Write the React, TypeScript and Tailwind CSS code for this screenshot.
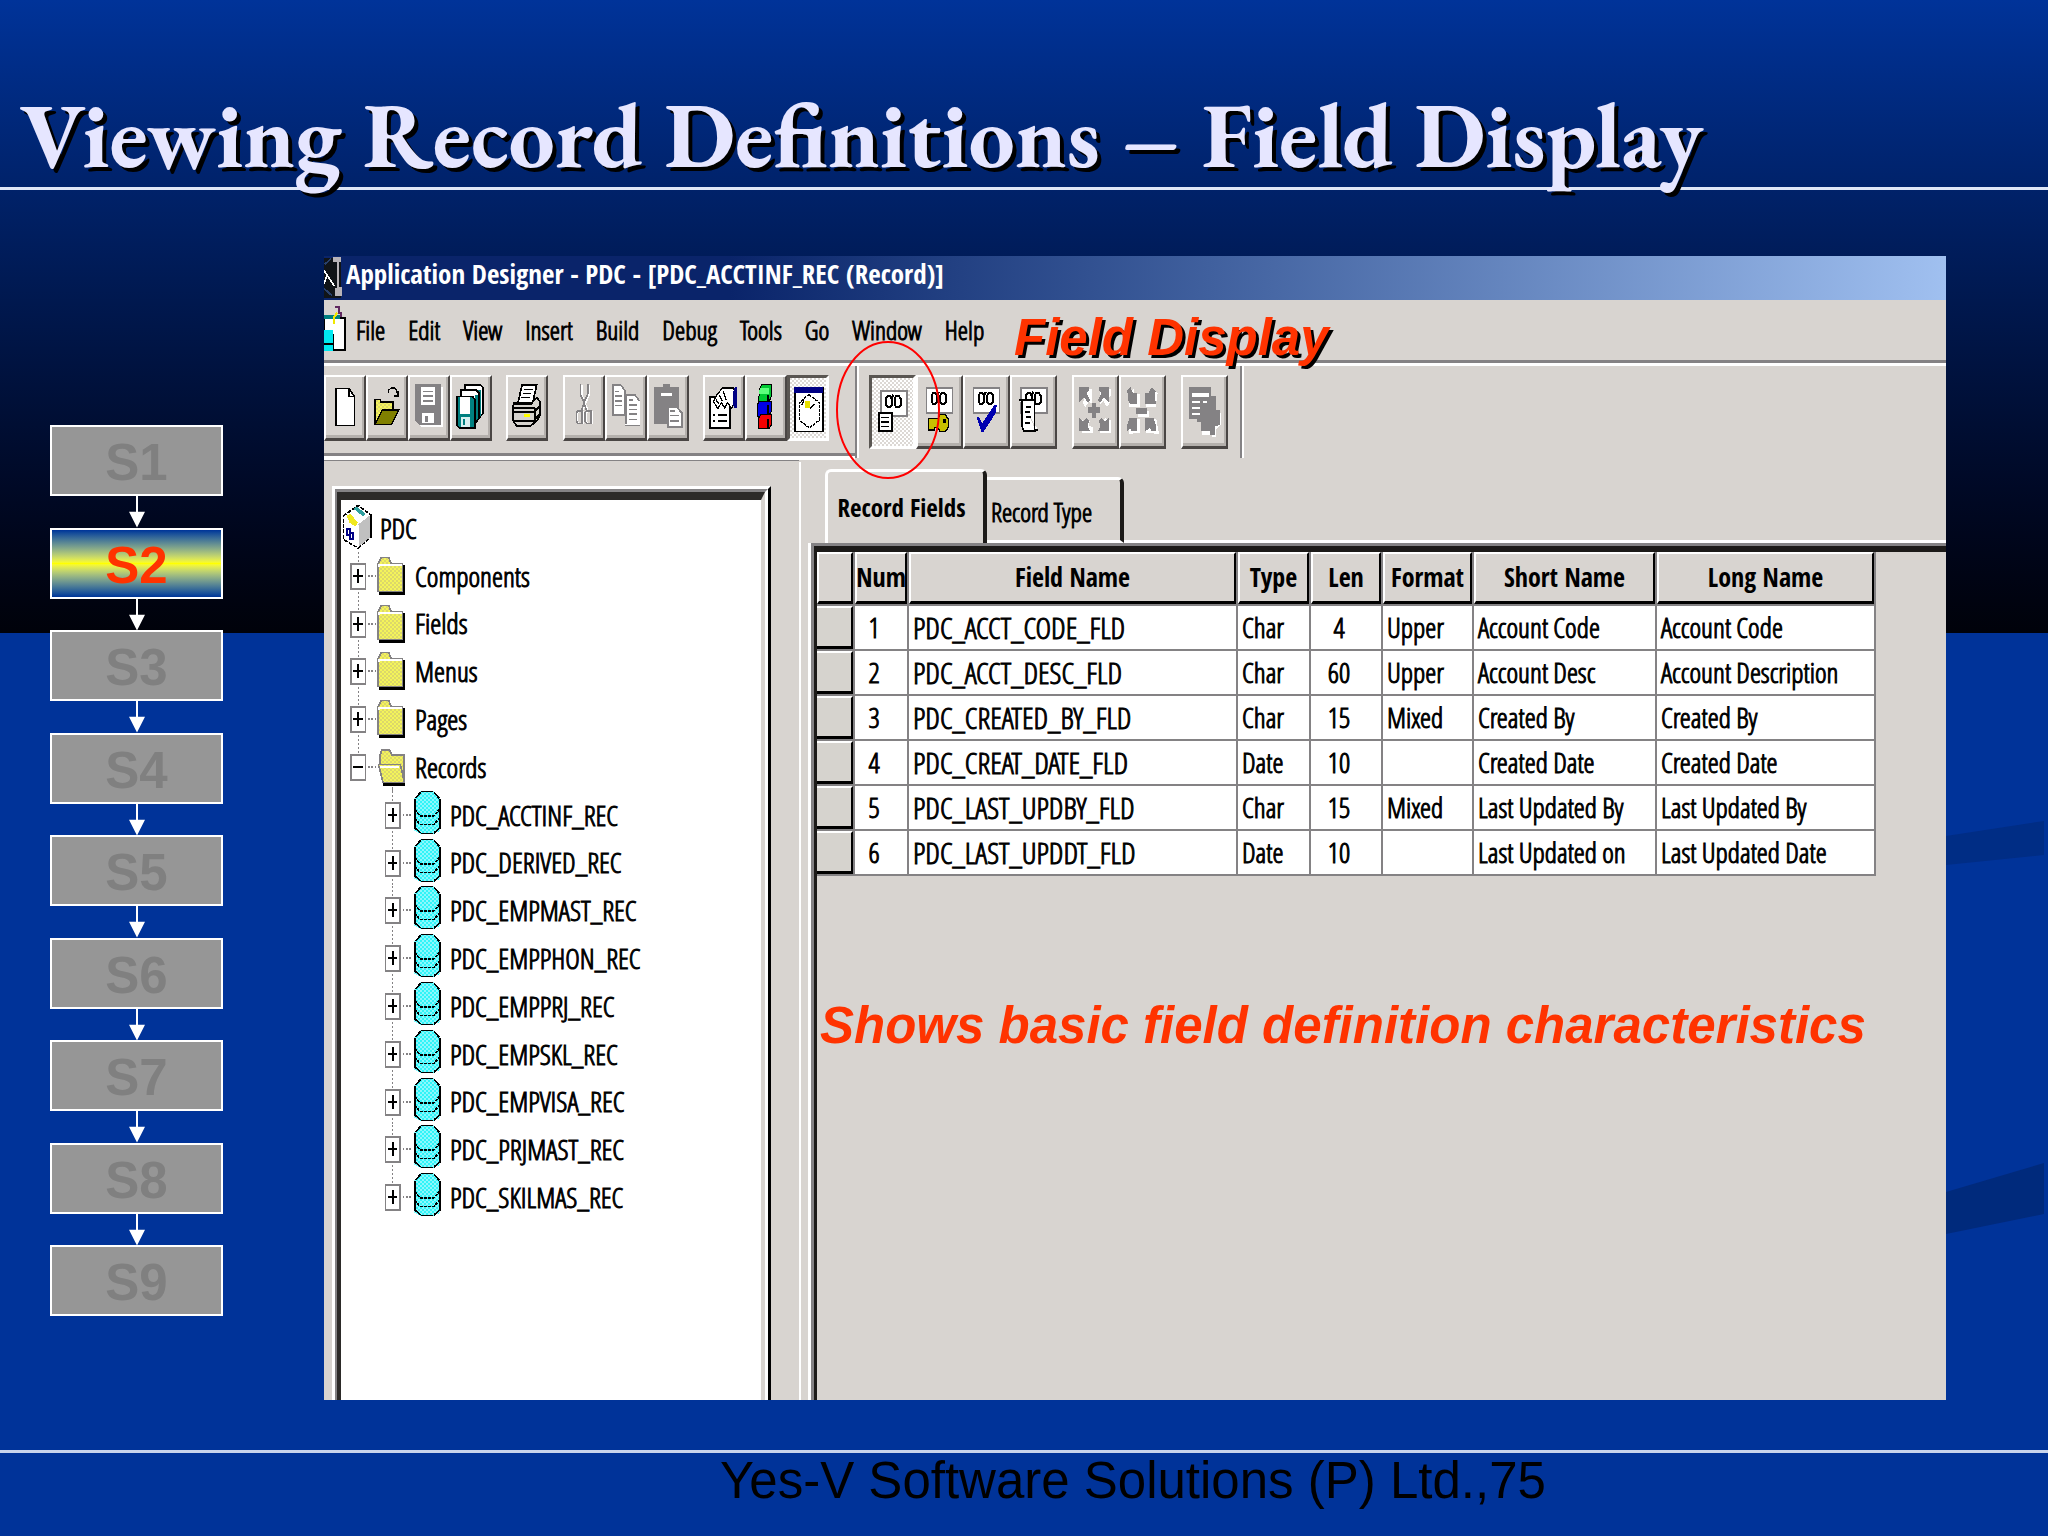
import type { ReactNode } from "react";
import clsx from "clsx";

const STEPS = ["S1", "S2", "S3", "S4", "S5", "S6", "S7", "S8", "S9"];
const CURRENT = "S2";

const MENUS = ["File", "Edit", "View", "Insert", "Build", "Debug", "Tools", "Go", "Window", "Help"];

const FOLDERS = ["Components", "Fields", "Menus", "Pages"];

const RECORDS = [
  "PDC_ACCTINF_REC",
  "PDC_DERIVED_REC",
  "PDC_EMPMAST_REC",
  "PDC_EMPPHON_REC",
  "PDC_EMPPRJ_REC",
  "PDC_EMPSKL_REC",
  "PDC_EMPVISA_REC",
  "PDC_PRJMAST_REC",
  "PDC_SKILMAS_REC",
];

const COLUMNS = [
  { label: "Num", width: "w-[54px]" },
  { label: "Field Name", width: "w-[329px]" },
  { label: "Type", width: "w-[73px]" },
  { label: "Len", width: "w-[72px]" },
  { label: "Format", width: "w-[91px]" },
  { label: "Short Name", width: "w-[183px]" },
  { label: "Long Name", width: "w-[219px]" },
];

const FIELDS = [
  ["1", "PDC_ACCT_CODE_FLD", "Char", "4", "Upper", "Account Code", "Account Code"],
  ["2", "PDC_ACCT_DESC_FLD", "Char", "60", "Upper", "Account Desc", "Account Description"],
  ["3", "PDC_CREATED_BY_FLD", "Char", "15", "Mixed", "Created By", "Created By"],
  ["4", "PDC_CREAT_DATE_FLD", "Date", "10", "", "Created Date", "Created Date"],
  ["5", "PDC_LAST_UPDBY_FLD", "Char", "15", "Mixed", "Last Updated By", "Last Updated By"],
  ["6", "PDC_LAST_UPDDT_FLD", "Date", "10", "", "Last Updated on", "Last Updated Date"],
];

const uiFont = "font-['Open_Sans_Condensed_Light','Roboto_Condensed',sans-serif]";
const uiBold = "font-['Open_Sans_Condensed','Roboto_Condensed',sans-serif] font-bold";
// the light condensed face is too thin for bitmap-style labels
const inked = "[-webkit-text-stroke:1px_#000]";

// shared fills: two-tone dithers, as 16-colour bitmaps have
function Patterns() {
  return (
    <svg className="absolute h-0 w-0" aria-hidden="true">
      <defs>
        <pattern id="yellow" width="12" height="12" patternUnits="userSpaceOnUse">
          <rect width="12" height="12" fill="#f4f45a" />
          <path d="M0 0h6v6H0zM6 6h6v6H6z" fill="#dcd86a" />
        </pattern>
        <pattern id="cyan" width="12" height="12" patternUnits="userSpaceOnUse">
          <rect width="12" height="12" fill="#30f4f8" />
          <path d="M0 0h6v6H0zM6 6h6v6H6z" fill="#8cf8fc" />
        </pattern>
        <pattern id="pressed" width="12" height="12" patternUnits="userSpaceOnUse">
          <rect width="12" height="12" fill="#ffffff" />
          <path d="M0 0h6v6H0zM6 6h6v6H6z" fill="#dcd8d4" />
        </pattern>
      </defs>
    </svg>
  );
}

function Backdrop() {
  return (
    <div className="absolute inset-0 bg-[#003399]">
      <div className="h-[633px] bg-linear-to-b from-[#003399] to-[#00020a]" />
      <svg className="absolute right-0 bottom-0 h-[776px] w-[108px]" viewBox="0 0 108 776" aria-hidden="true">
        <path d="M6 76L104 61V95L6 105Z" fill="#002d85" />
        <path d="M6 432L104 403V454L6 474Z" fill="#002a7c" />
      </svg>
    </div>
  );
}

function Steps() {
  return (
    <ol className="mt-[235px] ml-[50px] flex h-[891px] w-[173px] shrink-0 flex-col items-center font-['Liberation_Sans',sans-serif] text-[51px] font-bold">
      {STEPS.map((step, i) => (
        <li key={step} className={clsx("flex w-full flex-col items-center", i > 0 && "min-h-0 flex-1")}>
          {i > 0 && (
            <svg className="h-0 w-4 flex-1" viewBox="0 0 16 32" preserveAspectRatio="none" aria-hidden="true">
              <path d="M7 0h2v16h7L8 32 0 16h7z" fill="#ffffff" />
            </svg>
          )}
          <button
            className={clsx(
              "h-[71px] w-full shrink-0 border-2 border-white leading-[71px]",
              step === CURRENT
                ? "bg-linear-to-b from-[#003399] via-[#ffff00] to-[#003399] text-[#ff3300]"
                : "bg-[#969696] text-[#808080]"
            )}
          >
            {step}
          </button>
        </li>
      ))}
    </ol>
  );
}

function ToolButton({ label, view, pressed, tall, children }: {
  label: string;
  view: string;
  pressed?: boolean;
  tall?: boolean;
  children: ReactNode;
}) {
  return (
    <button
      aria-label={label}
      className={clsx(
        "shrink-0 overflow-hidden",
        tall ? "h-[74px] w-[47px]" : "h-[66px] w-[42px]",
        pressed
          ? "border-t-3 border-r-3 border-b-3 border-l-3 border-t-[#5a5652] border-r-white border-b-white border-l-[#5a5652]"
          : "border-t-2 border-r-2 border-b-3 border-l-2 border-t-white border-r-[#4a4644] border-b-[#4a4644] border-l-white shadow-[inset_-2px_-3px_0_#b4b0ac]"
      )}
    >
      <svg
        className={clsx(
          pressed ? "-mt-[3px] -ml-[3px]" : "-mt-[2px] -ml-[2px]",
          tall ? "h-[74px] w-[47px]" : "h-[66px] w-[42px]"
        )}
        viewBox={view}
        shapeRendering="crispEdges"
        aria-hidden="true"
      >
        {children}
      </svg>
    </button>
  );
}

function MainTools() {
  return (
    <div className="flex">
      <ToolButton label="New" view="12 45 126 198">
        <path d="M48 85h38l17 24v87H48z" fill="#fff" stroke="#000" strokeWidth="5" />
        <path d="M86 85v24h17" fill="none" stroke="#000" strokeWidth="5" />
      </ToolButton>
      <ToolButton label="Open" view="138 45 126 198">
        <path d="M165 190v-72h16v8h38v24h-30l-18 40z" fill="url(#yellow)" stroke="#000" strokeWidth="4" />
        <path d="M187 150h49l-21 43h-49z" fill="#808000" stroke="#000" strokeWidth="4" />
        <path d="M206 98v-8l8-6h10l6 8 4 16M222 108h14V92" fill="none" stroke="#000" strokeWidth="4" />
      </ToolButton>
      <ToolButton label="Save" view="264 45 126 198">
        <path d="M292 80h76v122h-62l-8-8z" fill="#fff" />
        <path d="M286 72h76v122h-66l-10-10z" fill="#848284" />
        <path d="M304 82h42v52h-42z" fill="#fff" />
        <path d="M310 92h30v5h-30zM310 106h30v5h-30zM310 120h30v5h-30z" fill="#848284" />
        <path d="M306 160h36v30h-36z" fill="#fff" />
        <path d="M314 168h10v18h-10z" fill="#848284" />
      </ToolButton>
      <ToolButton label="Save all" view="390 45 126 198">
        <path d="M434 92V75h48l6 8v78l-10 12h-44z" fill="#fff" stroke="#000" strokeWidth="5" />
        <path d="M474 90h10v76l-12 10z" fill="#008080" />
        <path d="M422 104V90h46l8 8v78l-8 12h-46z" fill="#fff" stroke="#000" strokeWidth="5" />
        <path d="M464 104h10v72l-10 12z" fill="#008080" />
        <path d="M411 109h46l7 8v87h-46l-7-9z" fill="#008080" stroke="#000" strokeWidth="5" />
        <path d="M419 111h32v50h-32z" fill="#fff" />
        <path d="M423 172h26v30h-26z" fill="#d8f0f0" />
        <path d="M428 178h8v18h-8z" fill="#008080" />
      </ToolButton>
      <div className="w-[14px]" />
      <ToolButton label="Print" view="558 45 126 198">
        <path d="M606 75h44l-12 54h-44z" fill="#fff" stroke="#000" strokeWidth="5" />
        <path d="M612 89h26M608 101h26M604 113h26" stroke="#000" strokeWidth="4" />
        <path d="M592 128h-10l-4 14v38l12 18h42l20-18 8-14v-40l-8-12-8 4-10 14H582" fill="#d6d3ce" stroke="#000" strokeWidth="5" />
        <path d="M578 144h66M578 156h66l18-22M580 182h62l20-24M644 144v44" fill="none" stroke="#000" strokeWidth="5" />
        <path d="M611 161h20v9h-20z" fill="#ffff00" />
      </ToolButton>
      <div className="w-[15px]" />
      <ToolButton label="Cut" view="729 45 126 198">
        <path d="M785 75v30l10 24 8 20M807 75v30l-10 24-8 20" fill="none" stroke="#fff" strokeWidth="5" />
        <path d="M776 154h14v36h-14l-4-6v-24zM804 154h12v36h-12l-6-6v-24z" fill="none" stroke="#fff" strokeWidth="5" />
        <path d="M781 72v30l10 24 8 24M803 72v30l-10 24-8 24" fill="none" stroke="#848284" strokeWidth="5" />
        <path d="M774 152h12v38h-12l-5-6v-26zM800 152h12v38h-12l-5-6v-26z" fill="none" stroke="#848284" strokeWidth="5" />
      </ToolButton>
      <ToolButton label="Copy" view="855 45 126 198">
        <path d="M878 75h24l12 16v74h-36z" fill="#fff" stroke="#848284" strokeWidth="5" />
        <path d="M884 94h14M884 108h22M884 122h22M884 136h22" stroke="#848284" strokeWidth="5" />
        <path d="M918 104h26l14 18v72h-40z" fill="#fff" stroke="#848284" strokeWidth="5" />
        <path d="M926 120h14M926 134h24M926 148h24M926 162h24M926 178h24" stroke="#848284" strokeWidth="5" />
        <path d="M958 122v72h-44" fill="none" stroke="#fff" strokeWidth="4" />
      </ToolButton>
      <ToolButton label="Paste" view="981 45 126 198">
        <path d="M1002 80h26v-9h22v9h26v112h-74z" fill="#848284" />
        <path d="M1024 98h32v9h-32z" fill="#fff" />
        <path d="M1043 140h26l16 18v42h-42z" fill="#fff" stroke="#848284" strokeWidth="5" />
        <path d="M1050 152h14M1050 166h26M1050 182h26" stroke="#848284" strokeWidth="5" />
      </ToolButton>
      <div className="w-[14px]" />
      <ToolButton label="Properties" view="1149 45 126 198">
        <path d="M1170 111h60v93h-60z" fill="#fff" stroke="#000" strokeWidth="5" />
        <path d="M1178 165h8M1194 165h26M1178 184h8M1194 184h26" stroke="#000" strokeWidth="6" />
        <path d="M1180 124l12-22 16-18h32l8 14v28l-14 18-12-16-8 16-10-16-10 18z" fill="#fff" stroke="#000" strokeWidth="4" />
        <path d="M1188 118l8 14M1198 104l10 20M1210 94l8 26" stroke="#000" strokeWidth="4" />
        <path d="M1244 82h8v62h-8l-4-8V94z" fill="#000084" />
      </ToolButton>
      <ToolButton label="Build" view="1275 45 126 198">
        <path d="M1320 84l6-12h29v34l-8 20h-32z" fill="#00c832" stroke="#000" strokeWidth="3" />
        <path d="M1320 84h26v18h-30z" fill="#5cff7c" />
        <path d="M1312 134l6-10h36v30l-8 14h-34z" fill="#0000e8" stroke="#000" strokeWidth="3" />
        <path d="M1316 174l6-10h33v30l-8 12h-31z" fill="#f40000" stroke="#000" strokeWidth="3" />
        <path d="M1344 104v20M1344 136v30M1344 176v28" stroke="#000" strokeWidth="4" />
      </ToolButton>
      <ToolButton label="Project workspace" view="1401 45 126 198" pressed>
        <path d="M1401 45h126v198h-126z" fill="url(#pressed)" />
        <path d="M1425 84h83v130h-83z" fill="#fff" stroke="#000" strokeWidth="5" />
        <path d="M1422 82h88v18h-88z" fill="#000084" />
        <path d="M1466 104l32 24v52l-30 24-30-24v-52z" fill="#fff" stroke="#000" strokeWidth="4" strokeDasharray="9 3" />
        <path d="M1454 124h16v20h-16z" fill="#e8e000" />
        <path d="M1470 146l14-14M1452 122l-8 14" stroke="#000" strokeWidth="4" />
      </ToolButton>
    </div>
  );
}

// small card with two loops, drawn at the top of each record view icon
function Card({ x, y }: { x: number; y: number }) {
  return (
    <g transform={`translate(${x} ${y})`}>
      <path d="M2 2h78v74H2z" fill="#fff" stroke="#848284" strokeWidth="5" />
      <path d="M18 24l4-6h8l5 6v20l-5 5h-8l-4-5zM44 24l4-6h9l5 6v20l-5 5h-9l-4-5zM35 22l5-8" fill="none" stroke="#000" strokeWidth="6" />
    </g>
  );
}

function RecordTools() {
  return (
    <div className="flex">
      <ToolButton label="Field display" view="147 135 141 222" pressed tall>
        <path d="M147 135h141v222H147z" fill="url(#pressed)" />
        <Card x={180} y={181} />
        <path d="M177 248h38v56h-38z" fill="#fff" stroke="#000" strokeWidth="6" />
        <path d="M184 262h24M184 275h24M184 289h24" stroke="#000" strokeWidth="5" />
      </ToolButton>
      <ToolButton label="Use display" view="288 135 141 222" tall>
        <Card x={317} y={172} />
        <path d="M326 266h28l6-12h16l9 14v24l-9 12h-16l-8-12h-8v8h-18z" fill="#c8c000" stroke="#000" strokeWidth="4" />
        <path d="M370 268h7v12h-7z" fill="#000" />
      </ToolButton>
      <ToolButton label="Edits display" view="429 135 141 222" tall>
        <Card x={458} y={172} />
        <path d="M470 262h8l8 18 36-54h8l-2 22-38 58h-6z" fill="#0000b0" />
      </ToolButton>
      <ToolButton label="PeopleCode display" view="570 135 141 222" tall>
        <Card x={600} y={172} />
        <path d="M597 210h46v90h12M606 212v76l6 15h36" fill="#fff" stroke="#000" strokeWidth="5" />
        <path d="M618 230h16M614 246h16M618 262h16M614 278h16" stroke="#000" strokeWidth="6" />
      </ToolButton>
      <div className="w-[15px]" />
      <ToolButton label="Expand all" view="759 135 141 222" tall>
        <path d="M788 178h32v44l-10-8-12 18-6-14 4-12-8-8zM876 178h-32v44l10-8 10 18 8-14-4-12 8-8zM788 308v-40l8 6 8-10 8 10-4 12 14 6v18zM876 308v-40l-8 6-8-10-8 10 4 12-14 6v18z" fill="#fff" />
        <path d="M781 172h30v10l-8 8 10 20-6 8-12-16-14 14zM869 172h-30v10l8 8-10 20 6 8 12-16 14 14zM781 304v-40l12 10 10-10 8 10-6 14 8 16zM869 304v-40l-12 10-10-10-8 10 6 14-8 16zM818 218h14v14h10v18h-10v14h-14v-14h-10v-18h10z" fill="#848284" />
      </ToolButton>
      <ToolButton label="Collapse all" view="900 135 141 222" tall>
        <path d="M930 188l16-12v16h16v40h-32zM982 232v-40h16v-16l18 14-6 42zM930 312v-22l10-22h22v40zM982 308v-40h30l8 44zM956 242h34v18h-34z" fill="#fff" />
        <path d="M925 182l10-10 6 16h14v34h-22l-6-14zM978 222v-34h12l6-16 14 10-2 24 4 16zM925 304v-20l6-20h22v40h-14l-6-10zM978 304v-40h26l8 24v16h-14l-6-10zM952 234h32v18h-32z" fill="#848284" />
      </ToolButton>
      <div className="w-[15px]" />
      <ToolButton label="Insert field" view="1086 135 141 222" tall>
        <path d="M1128 270h20v44h30v8h14v-24l14-16V250h-14z" fill="#fff" />
        <path d="M1110 172h66v26h16v42h10v44l-14 6v26h-16v-14h-26v-26h-12v-10h-24z" fill="#848284" />
        <path d="M1118 188h52v14h-52zM1118 212h26v8h-26zM1118 230h26v8h-26zM1118 248h26v8h-26zM1152 212h12v8h-12z" fill="#fff" />
      </ToolButton>
    </div>
  );
}

function Folder() {
  return (
    <>
      <path d="M178 268h76v88h-76z" fill="#000" />
      <path d="M174 346v-82l10-20h22l8 20h33v82z" fill="url(#yellow)" stroke="#848284" strokeWidth="5" />
      <path d="M178 272v-4h68" fill="none" stroke="#fff" strokeWidth="6" />
    </>
  );
}

function OpenFolder() {
  return (
    <>
      <path d="M190 268h66v90h-66z" fill="#000" />
      <path d="M180 300v-34l6-18h22l8 16h36v76h-6z" fill="url(#yellow)" stroke="#848284" strokeWidth="5" />
      <path d="M175 292h66l12 54h-64z" fill="url(#yellow)" stroke="#848284" strokeWidth="5" />
      <path d="M179 300h58" stroke="#fff" strokeWidth="8" />
    </>
  );
}

function Expander({ x, open, last }: { x: number; open?: boolean; last?: boolean }) {
  return (
    <>
      <path d={last ? `M${x} 228v36` : `M${x} 228v144`} stroke="#848284" strokeWidth="3" strokeDasharray="6 6" />
      <path d={`M${x + 30} 300h28`} stroke="#848284" strokeWidth="4" strokeDasharray="5 5" />
      <path d={`M${x - 22} 264h44v74h-44z`} fill="#fff" stroke="#848284" strokeWidth="5" />
      <path d={open ? `M${x - 14} 300h28` : `M${x - 14} 300h28M${x} 280v40`} stroke="#000" strokeWidth="5" />
    </>
  );
}

function TreeRow({ label, children, view, width }: { label: string; children: ReactNode; view: string; width: string }) {
  return (
    <li className="flex min-h-0 items-center">
      <svg className={clsx("h-12 shrink-0", width)} viewBox={view} shapeRendering="crispEdges" aria-hidden="true">
        {children}
      </svg>
      <button className={clsx("leading-8 whitespace-nowrap", inked)}>{label}</button>
    </li>
  );
}

function ProjectTree() {
  return (
    <ul className="mt-1 ml-px grid h-[717px] auto-rows-fr text-[28px]">
      <TreeRow label="PDC" view="66 80 114 144" width="w-[38px]">
        <path d="M70 116l44-32 38 28v68l-38 32-44-26z" fill="#fff" stroke="#000" strokeWidth="5" strokeDasharray="12 4" />
        <path d="M114 142l36-28v66l-36 30z" fill="#c0c0c0" />
        <path d="M72 118l42 26M114 144v66" stroke="#fff" strokeWidth="4" />
        <path d="M152 112v68" stroke="#000" strokeWidth="5" />
        <path d="M80 114l12-4 22 26-8 12-18-12z" fill="#f0e820" />
        <path d="M100 94l10-6 28 22-8 8z" fill="#30a0a0" />
        <path d="M80 154h10v12h8v18h-8v-12h-10z" fill="none" stroke="#000084" strokeWidth="5" />
      </TreeRow>
      {FOLDERS.map((name) => (
        <TreeRow key={name} label={name} view="66 228 219 144" width="w-[73px]">
          <Expander x={114} />
          <Folder />
        </TreeRow>
      ))}
      <TreeRow label="Records" view="66 228 219 144" width="w-[73px]">
        <Expander x={114} open last />
        <path d="M218 360v12" stroke="#848284" strokeWidth="3" />
        <OpenFolder />
      </TreeRow>
      {RECORDS.map((name, i) => (
        <TreeRow key={name} label={name} view="66 228 324 144" width="w-[108px]">
          <Expander x={218} last={i === RECORDS.length - 1} />
          <path d="M302 228h38l20 22v98l-20 8h-38l-19-8v-98z" fill="url(#cyan)" />
          <path d="M302 229h38M302 355h38M284 252v90M359 252v90M286 250l16-18M358 250l-16-18M286 340l16 14M358 340l-16 14" stroke="#000" strokeWidth="5" />
          <path d="M284 284l16 18h42l16-18M284 310l16 18h42l16-18" fill="none" stroke="#000" strokeWidth="5" strokeDasharray="9 3" />
        </TreeRow>
      ))}
    </ul>
  );
}

function FieldTable() {
  return (
    <table className="w-[1059px] table-fixed border-separate border-spacing-0 text-[28px]">
      <thead>
        <tr className={clsx("h-[54px] text-[26px]", uiBold)}>
          <th className="w-[38px] border-r-2 border-b-2 border-[#848284] p-0" aria-label="Row">
            <div className="h-[52px] border-t-2 border-r-2 border-b-3 border-l-2 border-t-white border-r-black border-b-black border-l-white" />
          </th>
          {COLUMNS.map((column) => (
            <th key={column.label} scope="col" className={clsx("border-r-2 border-b-2 border-[#848284] p-0", column.width)}>
              <div className="flex h-[52px] items-center justify-center border-t-2 border-r-2 border-b-3 border-l-2 border-t-white border-r-black border-b-black border-l-white">
                {column.label}
              </div>
            </th>
          ))}
        </tr>
      </thead>
      <tbody className={inked}>
        {FIELDS.map((row) => (
          <tr key={row[0]} className="h-[45px]">
            <td className="border-r-2 border-b-2 border-[#848284] bg-[#d6d3ce] p-0">
              <div className="h-[43px] border-t-2 border-r-2 border-b-3 border-t-white border-r-black border-b-black" />
            </td>
            {row.map((cell, i) => (
              <td
                key={i}
                className={clsx(
                  "border-r-2 border-b-2 border-[#848284] bg-white p-0 leading-[43px] whitespace-nowrap",
                  i === 0 || i === 3 ? "pr-[14px] text-center" : "pl-1",
                  i === 1 && "text-[30px]"
                )}
              >
                {cell}
              </td>
            ))}
          </tr>
        ))}
      </tbody>
    </table>
  );
}

function DesignerWindow() {
  return (
    <section className={clsx("mt-[66px] mr-[102px] mb-[50px] ml-[101px] flex min-w-0 flex-1 flex-col bg-[#d8d4d0] text-black", uiFont)}>
      <div className={clsx("flex h-11 items-center bg-linear-to-r from-[#0a246a] from-25% to-[#a0c0f0] text-[27px] text-white", uiBold)}>
        <svg className="h-11 w-[22px]" viewBox="12 15 66 132" shapeRendering="crispEdges" aria-hidden="true">
          <path d="M12 20h50v122H12z" fill="#101418" />
          <path d="M40 18h24v14h-6v76h8v28H46v-24h4V32H40z" fill="#b8b4b8" />
          <path d="M12 58l32 48M12 100l8-24" stroke="#fff" strokeWidth="5" />
          <path d="M12 112l24 22M14 40l20-18" stroke="#28406c" strokeWidth="5" />
        </svg>
        <h2 className="pb-2">Application Designer - PDC - [PDC_ACCTINF_REC (Record)]</h2>
      </div>

      <nav className="relative flex h-[60px] items-center gap-[23px] text-[26px]">
        <svg className="-mr-[13px] h-[60px] w-[22px]" viewBox="12 150 66 180" shapeRendering="crispEdges" aria-hidden="true">
          <path d="M12 204h64v96H12z" fill="#fff" stroke="#000" strokeWidth="6" />
          <path d="M12 196h48v10H12z" fill="#008080" />
          <path d="M12 240h28v64H12z" fill="#00e8f0" />
          <path d="M12 282h26M40 252v52" stroke="#000" strokeWidth="5" />
          <path d="M42 222v-20l10-14" fill="none" stroke="#f0e800" strokeWidth="6" />
          <path d="M46 172h10v16h8v14" fill="none" stroke="#602860" strokeWidth="6" />
        </svg>
        {MENUS.map((menu) => (
          <button key={menu} className={inked}>
            {menu}
          </button>
        ))}
        <p className="absolute top-2 left-[690px] font-['Liberation_Sans',sans-serif] text-[51px] leading-[60px] font-bold whitespace-nowrap text-[#ff3300] italic [text-shadow:3px_3px_0_#000]">
          Field Display
        </p>
      </nav>
      <div className="border-t-3 border-b-3 border-t-[#848284] border-b-white" />

      <div className="relative flex h-[96px] items-start">
        <div className="h-[90px] w-[531px] border-b-3 border-[#848284] pt-[9px] shadow-[0_4px_0_#fff]">
          <MainTools />
        </div>
        <div className="flex h-[92px] border-r-2 border-l-2 border-[#848284] pt-[9px] pr-[12px] pl-[12px] shadow-[inset_2px_0_0_#fff,2px_0_0_#fff]">
          <RecordTools />
        </div>
        {/* callout ring around the pressed button */}
        <svg className="absolute -top-[26px] left-[511px] h-[140px] w-[106px]" viewBox="0 0 106 140" aria-hidden="true">
          <ellipse cx="53" cy="70" rx="51" ry="68" fill="none" stroke="#ff0000" strokeWidth="2" />
        </svg>
      </div>

      <div className="flex flex-1">
        <div className="flex w-[477px] flex-col border-r-2 border-white pr-[28px] pl-[8px]">
          <div className="-mt-[4px] mr-[-28px] ml-[-8px] border-t-3 border-[#848284]" />
          <div className="mt-[25px] flex flex-1 flex-col border-t-3 border-r-3 border-l-3 border-t-white border-r-black border-l-white">
            <div className="flex flex-1 flex-col border-t-3 border-r-3 border-l-2 border-t-[#848284] border-r-white border-l-[#848284]">
              <div className="flex-1 border-t-8 border-r-4 border-l-4 border-t-[#2c2a28] border-r-[#d8d4d0] border-l-[#2c2a28] bg-white">
                <ProjectTree />
              </div>
            </div>
          </div>
        </div>

        <div className="flex min-w-0 flex-1 flex-col pt-[7px] pl-[7px]">
          <div className="flex h-[74px] items-end pl-[17px]" role="tablist">
            <button
              role="tab"
              aria-selected="true"
              className={clsx(
                "h-[74px] w-[162px] rounded-t-md border-t-3 border-r-4 border-l-3 border-t-white border-r-[#1c1a18] border-l-white pr-2 text-[25px] whitespace-nowrap",
                uiBold
              )}
            >
              Record Fields
            </button>
            <button
              role="tab"
              aria-selected="false"
              className={clsx(
                "h-[66px] w-[137px] rounded-tr-md border-t-3 border-r-4 border-b-3 border-t-white border-r-[#1c1a18] border-b-white pt-1 pr-6 text-[26px] whitespace-nowrap",
                inked
              )}
            >
              Record Type
            </button>
            <div className="flex-1 border-b-3 border-white" />
          </div>
          <div className="flex flex-1 flex-col border-l-3 border-white">
            <div className="flex flex-1 flex-col border-t-3 border-l-3 border-[#848284]">
              <div className="flex-1 border-t-6 border-l-3 border-[#1c1a18]">
                <FieldTable />
                <p className="mt-[120px] ml-[3px] font-['Liberation_Sans',sans-serif] text-[51px] leading-[60px] font-bold whitespace-nowrap text-[#ff3300] italic">
                  Shows basic field definition characteristics
                </p>
              </div>
            </div>
          </div>
        </div>
      </div>
    </section>
  );
}

export default function App() {
  return (
    <div className="relative flex min-h-screen flex-col">
      <Patterns />
      <Backdrop />
      <header className="relative h-[190px] border-b-3 border-[#dfe6f6]">
        <h1 className="pt-[76px] pl-5 font-['EB_Garamond','Liberation_Serif',serif] text-[92px] leading-[116px] font-bold whitespace-nowrap text-[#e6e6ff] [text-shadow:4px_4px_0_#000]">
          Viewing Record Definitions – Field Display
        </h1>
      </header>
      <main className="relative flex flex-1">
        <Steps />
        <DesignerWindow />
      </main>
      <footer className="relative h-[86px] border-t-3 border-[#c8d4ec] pl-[720px] font-['Liberation_Sans',sans-serif] text-[51px] leading-[56px] whitespace-nowrap text-black">
        Yes-V Software Solutions (P) Ltd.,75
      </footer>
    </div>
  );
}
